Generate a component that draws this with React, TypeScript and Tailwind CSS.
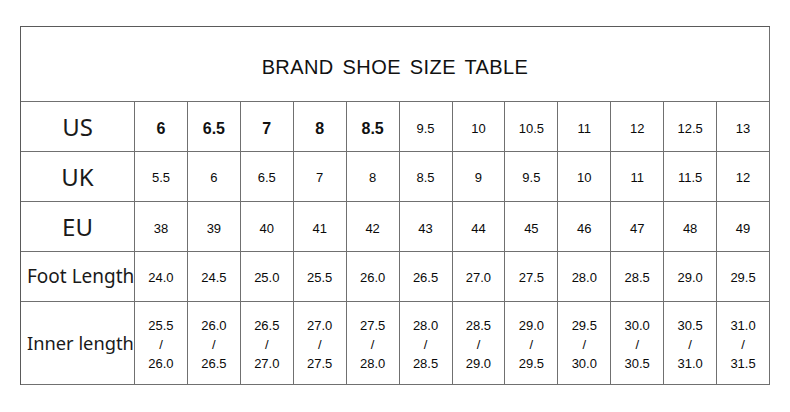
const US = ['6', '6.5', '7', '8', '8.5', '9.5', '10', '10.5', '11', '12', '12.5', '13'];
const UK = ['5.5', '6', '6.5', '7', '8', '8.5', '9', '9.5', '10', '11', '11.5', '12'];
const EU = ['38', '39', '40', '41', '42', '43', '44', '45', '46', '47', '48', '49'];
const FOOT = ['24.0', '24.5', '25.0', '25.5', '26.0', '26.5', '27.0', '27.5', '28.0', '28.5', '29.0', '29.5'];
const INNER = [
  ['25.5', '26.0'], ['26.0', '26.5'], ['26.5', '27.0'], ['27.0', '27.5'], ['27.5', '28.0'], ['28.0', '28.5'],
  ['28.5', '29.0'], ['29.0', '29.5'], ['29.5', '30.0'], ['30.0', '30.5'], ['30.5', '31.0'], ['31.0', '31.5'],
];

const cell = 'border-r border-b border-[#707070] flex items-center justify-center';
const num = "font-['Liberation_Sans',Arial,sans-serif] text-[13px] text-[#0a0a0a]";

function Label({ text, size }: { text: string; size: 'big' | 'foot' | 'inner' }) {
  const sz = size === 'big' ? 'text-[24px]' : size === 'foot' ? 'text-[19px] justify-start pl-[6px]' : 'text-[18.3px] justify-start pl-[6px]';
  return (
    <div className={`${cell} ${sz} whitespace-nowrap font-['Noto_Sans',sans-serif] text-[#1a1a1a]`}>
      {text}
    </div>
  );
}

export default function App() {
  return (
    <div className="w-[790px] h-[412px] bg-white pt-[26px] pl-[20px]">
      <div className="w-[750px] border-t border-l border-[#5a5a5a] grid grid-cols-[114px_repeat(12,minmax(0,1fr))] grid-rows-[75px_50px_50px_50px_50px_83px]">
        {/* title */}
        <div className={`${cell} col-span-13 pt-[6px] font-['Liberation_Sans',Arial,sans-serif] text-[20px] tracking-[0.4px] [word-spacing:3px] text-[#111]`}>
          BRAND SHOE SIZE TABLE
        </div>

        <Label text="US" size="big" />
        {US.map((v, i) => (
          <div key={v} className={`${cell} pt-[5px]`}>
            <span className={i < 5 ? "font-['Liberation_Sans',Arial,sans-serif] text-[16px] font-bold text-[#111]" : num}>{v}</span>
          </div>
        ))}

        <Label text="UK" size="big" />
        {UK.map((v, i) => (
          <div key={i} className={`${cell} pt-[2px]`}>
            <span className={num}>{v}</span>
          </div>
        ))}

        <Label text="EU" size="big" />
        {EU.map((v) => (
          <div key={v} className={`${cell} pt-[4px]`}>
            <span className={num}>{v}</span>
          </div>
        ))}

        <Label text="Foot Length" size="foot" />
        {FOOT.map((v) => (
          <div key={v} className={`${cell} pt-[2px]`}>
            <span className={num}>{v}</span>
          </div>
        ))}

        <Label text="Inner length" size="inner" />
        {INNER.map(([a, b]) => (
          <div key={a} className={`${cell} flex-col pt-[2px]`}>
            <span className={`${num} leading-[19px]`}>{a}</span>
            <span className={`${num} leading-[19px]`}>/</span>
            <span className={`${num} leading-[19px]`}>{b}</span>
          </div>
        ))}
      </div>
    </div>
  );
}
